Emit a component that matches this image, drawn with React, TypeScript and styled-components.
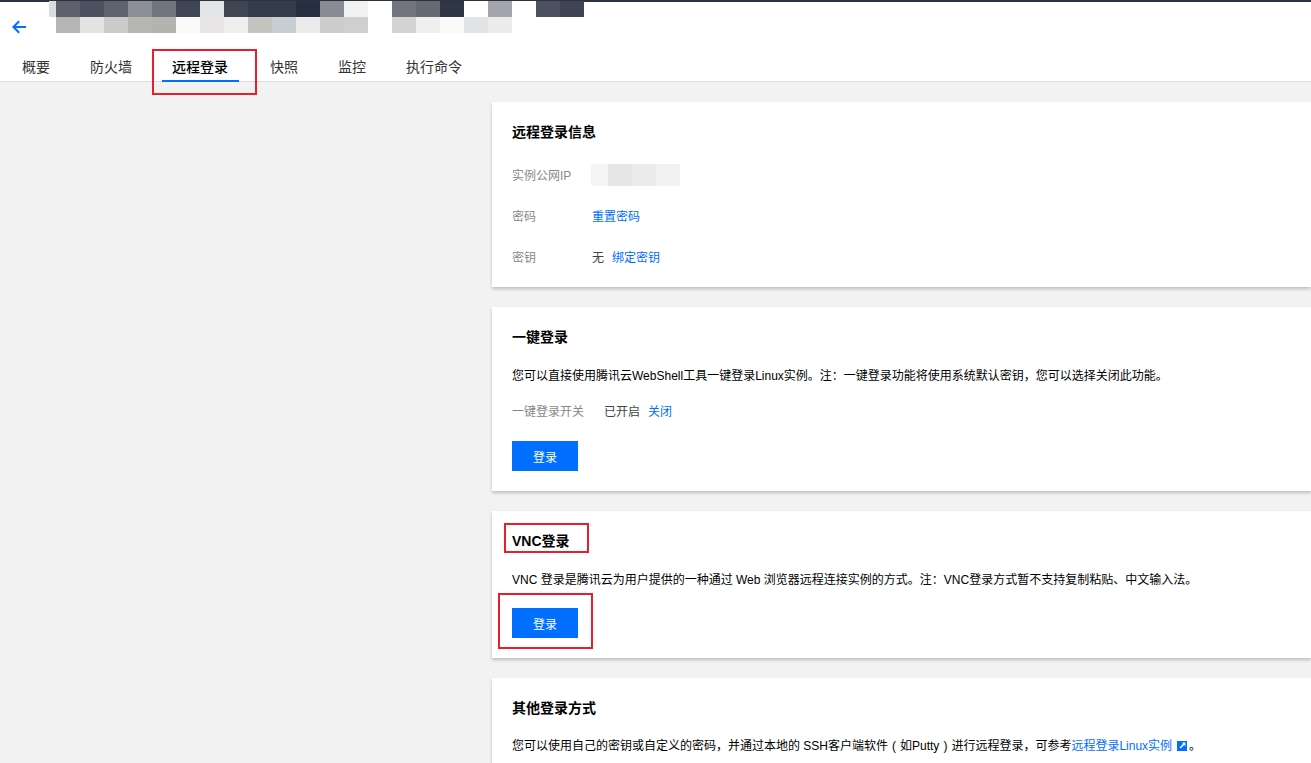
import styled, { createGlobalStyle } from 'styled-components';

const GlobalStyle = createGlobalStyle`
  html, body {
    margin: 0;
    padding: 0;
    height: 100%;
    overflow: hidden;
    background: #f2f2f2;
    font-family: "Liberation Sans", "Noto Sans CJK SC", sans-serif;
    font-size: 12px;
    color: #000;
  }
`;

const Page = styled.div`
  height: 763px;
  overflow: hidden;
`;

const Header = styled.header`
  box-sizing: border-box;
  height: 82px;
  background: #fff;
  border-top: 2px solid #2b3240;
  border-bottom: 1px solid #ddd;
  display: flex;
  flex-direction: column;
`;

const TitleBar = styled.div`
  display: flex;
  align-items: flex-start;
  height: 46px;
  padding-left: 12px;
`;

const BackLink = styled.a`
  display: flex;
  width: 14px;
  height: 14px;
  margin-top: 18px;
  color: #006eff;
`;

const Mosaic = styled.div`
  display: grid;
  grid-template-columns: 7px repeat(22, 24px);
  grid-auto-rows: 16px;
  margin: -1px 0 0 23px;
`;

const Cell = styled.span<{ $c: string }>`
  background: ${(p) => p.$c};
`;

const TabList = styled.nav`
  display: flex;
  height: 33px;
  padding-left: 12px;
  gap: 20px;
`;

const Tab = styled.a<{ $active?: boolean }>`
  position: relative;
  display: flex;
  align-items: center;
  box-sizing: border-box;
  height: 34px;
  padding: 12px ${(p) => (p.$active ? 11 : 10)}px 8px 10px;
  margin-right: ${(p) => (p.$active ? 1 : 0)}px;
  font-size: 14px;
  color: ${(p) => (p.$active ? '#000' : '#333')};
  font-weight: ${(p) => (p.$active ? 500 : 400)};
  border-bottom: 2px solid ${(p) => (p.$active ? '#006eff' : 'transparent')};
`;

const Callout = styled.span`
  position: absolute;
  box-sizing: border-box;
  border: 2px solid #e71f2b;
  pointer-events: none;
`;

const TabCallout = styled(Callout)`
  left: -10px;
  top: 1px;
  width: 105px;
  height: 46px;
`;

const Main = styled.main`
  display: flex;
  flex-direction: column;
  gap: 20px;
  padding: 20px 0 0 492px;
`;

const Card = styled.section`
  background: #fff;
  padding: 20px;
  box-shadow: 0 2px 3px rgba(54, 58, 80, 0.28);
`;

const InfoCard = styled(Card)`
  padding-bottom: 10px;
`;

const CardTitle = styled.h3`
  position: relative;
  display: block;
  margin: 0;
  font-size: 14px;
  line-height: 20px;
  font-weight: 700;
  color: #000;
`;

const TitleCallout = styled(Callout)`
  left: -8px;
  top: -8px;
  width: 85px;
  height: 30px;
`;

const InfoList = styled.dl`
  margin: 12px 0 0;
`;

const InfoRow = styled.div`
  display: flex;
  align-items: center;
  height: 41px;
`;

const InfoLabel = styled.dt`
  width: 80px;
  color: #888;
`;

const InfoValue = styled.dd`
  display: flex;
  align-items: center;
  margin: 0;
  color: #444;
`;

const IpBlur = styled.div`
  display: grid;
  grid-template-columns: 17px 24px 24px 24px;
  height: 22px;
  margin-left: -1px;
`;

const Link = styled.a<{ $gap?: number }>`
  color: #006eff;
  margin-left: ${(p) => p.$gap ?? 0}px;
`;

const Desc = styled.p<{ $top?: number }>`
  margin: ${(p) => p.$top ?? 19}px 0 0;
  line-height: 20px;
  color: #000;
`;

const Paren = styled.span`
  display: inline-block;
  width: 12px;
  text-align: center;
`;

const SwitchRow = styled.div`
  display: flex;
  align-items: center;
  height: 20px;
  margin-top: 14px;
`;

const SwitchLabel = styled.span`
  width: 92px;
  color: #888;
`;

const SwitchValue = styled.span`
  color: #444;
`;

const PrimaryButton = styled.button<{ $top?: number }>`
  position: relative;
  display: block;
  width: 66px;
  height: 30px;
  margin-top: ${(p) => p.$top ?? 20}px;
  padding: 0;
  border: 0;
  background: #006eff;
  color: #fff;
  font: inherit;
`;

const ButtonCallout = styled(Callout)`
  left: -14px;
  top: -15px;
  width: 95px;
  height: 56px;
`;

const ExternalIcon = styled.svg`
  width: 10px;
  height: 10px;
  margin: 0 2px 0 5px;
  vertical-align: -1px;
`;

const topCells = [
  '#dcdcde', '#5e616b', '#4c5160', '#5e626c', '#8d8f97', '#71757e', '#3f4552', '#e4e5e7', '#3f4553', '#343b4b', '#343b4b',
  '#262e3f', '#8a8c94', '#f1f1f1', '#fff', '#72757e', '#666a73', '#2f3747', '#fff', '#a5a6ad', '#fff', '#4c5160', '#3f4452',
];
const bottomCells = [
  '#fff', '#b5b5b5', '#e3e3e1', '#cbcbc9', '#b6b7b3', '#b3b3af', '#fafafa', '#e8e6e7', '#eeeeee', '#c3c3c0', '#c9ced2',
  '#ebebeb', '#cdcdcd', '#cfcfcf', '#fff', '#d3d3d1', '#eeeeec', '#fafafa', '#e2e3e5', '#ececec', '#fff', '#fff', '#fff',
];
const ipCells = ['#f5f5f5', '#e6e6e6', '#ececec', '#f2f2f2'];

const tabs = ['概要', '防火墙', '远程登录', '快照', '监控', '执行命令'];

export default function App() {
  return (
    <Page>
      <GlobalStyle />
      <Header>
        <TitleBar>
          <BackLink>
            <svg viewBox="0 0 14 14" width="14" height="14" fill="none" stroke="currentColor" strokeWidth="2">
              <path d="M14 7H1.5M7.2 1.2 1.4 7l5.8 5.8" />
            </svg>
          </BackLink>
          <Mosaic>
            {[...topCells, ...bottomCells].map((c, i) => (
              <Cell key={i} $c={c} />
            ))}
          </Mosaic>
        </TitleBar>
        <TabList>
          {tabs.map((t) => (
            <Tab key={t} $active={t === '远程登录'}>
              {t}
              {t === '远程登录' && <TabCallout />}
            </Tab>
          ))}
        </TabList>
      </Header>
      <Main>
        <InfoCard>
          <CardTitle>远程登录信息</CardTitle>
          <InfoList>
            <InfoRow>
              <InfoLabel>实例公网IP</InfoLabel>
              <InfoValue>
                <IpBlur>
                  {ipCells.map((c, i) => (
                    <Cell key={i} $c={c} />
                  ))}
                </IpBlur>
              </InfoValue>
            </InfoRow>
            <InfoRow>
              <InfoLabel>密码</InfoLabel>
              <InfoValue>
                <Link>重置密码</Link>
              </InfoValue>
            </InfoRow>
            <InfoRow>
              <InfoLabel>密钥</InfoLabel>
              <InfoValue>
                无<Link $gap={8}>绑定密钥</Link>
              </InfoValue>
            </InfoRow>
          </InfoList>
        </InfoCard>
        <Card>
          <CardTitle>一键登录</CardTitle>
          <Desc>您可以直接使用腾讯云WebShell工具一键登录Linux实例。注：一键登录功能将使用系统默认密钥，您可以选择关闭此功能。</Desc>
          <SwitchRow>
            <SwitchLabel>一键登录开关</SwitchLabel>
            <SwitchValue>已开启</SwitchValue>
            <Link $gap={8}>关闭</Link>
          </SwitchRow>
          <PrimaryButton $top={21}>登录</PrimaryButton>
        </Card>
        <Card>
          <CardTitle>
            VNC登录
            <TitleCallout />
          </CardTitle>
          <Desc>VNC 登录是腾讯云为用户提供的一种通过 Web 浏览器远程连接实例的方式。注：VNC登录方式暂不支持复制粘贴、中文输入法。</Desc>
          <PrimaryButton $top={18}>
            登录
            <ButtonCallout />
          </PrimaryButton>
        </Card>
        <Card>
          <CardTitle>其他登录方式</CardTitle>
          <Desc $top={18}>
            您可以使用自己的密钥或自定义的密码，并通过本地的 SSH客户端软件<Paren>(</Paren>如Putty<Paren>)</Paren>进行远程登录，可参考
            <Link>远程登录Linux实例</Link>
            <ExternalIcon viewBox="0 0 10 10">
              <path fill="#006eff" d="M0 0h10v10H0z" />
              <path fill="#fff" d="M5 1.6h3.4V5L7.2 3.9 3.6 7.4 2.6 6.4 6.1 2.8z" />
            </ExternalIcon>
            。
          </Desc>
        </Card>
      </Main>
    </Page>
  );
}
